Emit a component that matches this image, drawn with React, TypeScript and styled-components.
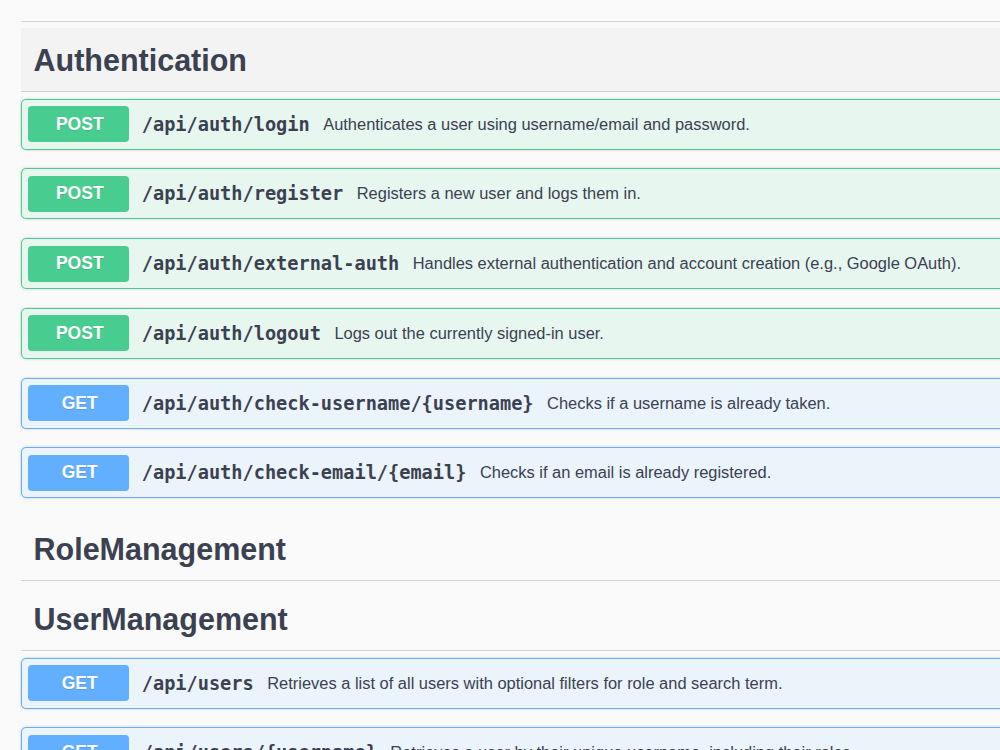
import React from "react";
import styled, { createGlobalStyle } from "styled-components";

const GlobalStyle = createGlobalStyle`
  html, body {
    margin: 0;
    padding: 0;
    background: #fafafa;
    overflow: hidden;
  }
  body {
    font-family: "Liberation Sans", Arial, sans-serif;
    color: #3b4151;
  }
`;

const Page = styled.div`
  width: 1400px;
  padding-left: 21px;
  box-sizing: border-box;
`;

const TagSection = styled.section<{ $first?: boolean }>`
  display: flex;
  flex-direction: column;
  margin-top: ${(p) => (p.$first ? "-42px" : "0")};
`;

const TagHeader = styled.h3<{ $hover?: boolean; $lift?: boolean }>`
  display: flex;
  align-items: center;
  box-sizing: border-box;
  height: 64px;
  margin: 0 0 6.25px;
  padding: ${(p) => (p.$lift ? "0 25px 2px 12.5px" : "2px 25px 0 12.5px")};
  border-bottom: 1.25px solid rgba(59, 65, 81, 0.2);
  background: ${(p) => (p.$hover ? "#f3f3f3" : "transparent")};
  font-family: "Liberation Sans", Arial, sans-serif;
  font-size: 30.5px;
  font-weight: 700;
  color: #3b4151;
`;

const Ops = styled.div`
  display: flex;
  flex-direction: column;
  gap: 18.75px;
  margin-bottom: 18.75px;
`;

type Method = "POST" | "GET";

const palette: Record<Method, { main: string; bg: string }> = {
  POST: { main: "#49cc90", bg: "#e8f6f0" },
  GET: { main: "#61affe", bg: "#ebf3fb" },
};

const OpBlock = styled.div<{ $m: Method }>`
  display: flex;
  align-items: center;
  box-sizing: border-box;
  height: 51px;
  padding: 0 6.25px;
  border: 1.25px solid ${(p) => palette[p.$m].main};
  border-radius: 5px;
  background: ${(p) => palette[p.$m].bg};
  box-shadow: 0 0 3px rgba(0, 0, 0, 0.19);
`;

const MethodTag = styled.span<{ $m: Method }>`
  flex: none;
  display: flex;
  align-items: center;
  justify-content: center;
  width: 101px;
  height: 36px;
  padding-left: 2px;
  box-sizing: border-box;
  border-radius: 3.75px;
  background: ${(p) => palette[p.$m].main};
  color: #fff;
  font-family: "Liberation Sans", Arial, sans-serif;
  font-size: 17.5px;
  font-weight: 700;
  text-shadow: 0 1px 0 rgba(0, 0, 0, 0.1);
`;

const Path = styled.span`
  flex: none;
  padding: 0 12.5px;
  font-family: "DejaVu Sans Mono", monospace;
  font-size: 18.6px;
  font-weight: 700;
  color: #3b4151;
`;

const Desc = styled.span`
  flex: none;
  padding-left: 1px;
  font-family: "Liberation Sans", Arial, sans-serif;
  font-size: 16.45px;
  color: #3b4151;
`;

type Op = { m: Method; path: string; desc: string };

const authOps: Op[] = [
  { m: "POST", path: "/api/auth/login", desc: "Authenticates a user using username/email and password." },
  { m: "POST", path: "/api/auth/register", desc: "Registers a new user and logs them in." },
  {
    m: "POST",
    path: "/api/auth/external-auth",
    desc: "Handles external authentication and account creation (e.g., Google OAuth).",
  },
  { m: "POST", path: "/api/auth/logout", desc: "Logs out the currently signed-in user." },
  { m: "GET", path: "/api/auth/check-username/{username}", desc: "Checks if a username is already taken." },
  { m: "GET", path: "/api/auth/check-email/{email}", desc: "Checks if an email is already registered." },
];

const userOps: Op[] = [
  { m: "GET", path: "/api/users", desc: "Retrieves a list of all users with optional filters for role and search term." },
  {
    m: "GET",
    path: "/api/users/{username}",
    desc: "Retrieves a user by their unique username, including their roles.",
  },
];

const OpList = ({ ops }: { ops: Op[] }) => (
  <Ops>
    {ops.map((o) => (
      <OpBlock key={o.path} $m={o.m}>
        <MethodTag $m={o.m}>{o.m}</MethodTag>
        <Path>{o.path}</Path>
        <Desc>{o.desc}</Desc>
      </OpBlock>
    ))}
  </Ops>
);

export default function App() {
  return (
    <>
      <GlobalStyle />
      <Page>
        <TagSection $first>
          <TagHeader $lift>Users</TagHeader>
        </TagSection>
        <TagSection>
          <TagHeader $hover>Authentication</TagHeader>
          <OpList ops={authOps} />
        </TagSection>
        <TagSection>
          <TagHeader>RoleManagement</TagHeader>
        </TagSection>
        <TagSection>
          <TagHeader>UserManagement</TagHeader>
          <OpList ops={userOps} />
        </TagSection>
      </Page>
    </>
  );
}
